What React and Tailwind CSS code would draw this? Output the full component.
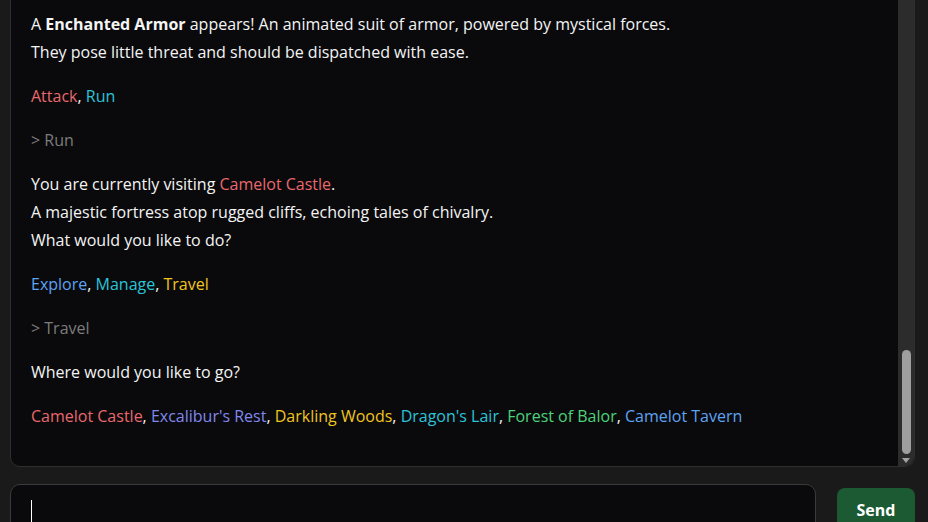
import React from "react";

const C = {
  red: "text-[#e8686c]",
  cyan: "text-[#2cc3d9]",
  blue: "text-[#5ea3f2]",
  indigo: "text-[#8088ec]",
  yellow: "text-[#f0c520]",
  green: "text-[#4cd37a]",
};

function Opts({ items }) {
  return (
    <p className="mb-4">
      {items.map(([t, c], i) => (
        <React.Fragment key={t}>
          <span className={c}>{t}</span>
          {i < items.length - 1 ? ", " : ""}
        </React.Fragment>
      ))}
    </p>
  );
}

export default function App() {
  return (
    <div
      className="h-screen overflow-hidden bg-[#1a1a1a] pl-[10px] pr-[13px] flex flex-col"
      style={{ fontFamily: "'Open Sans', 'Noto Sans', sans-serif" }}
    >
      <div className="-mt-[24px] h-[491px] shrink-0 flex rounded-[10px] border border-[#2e2e2e] bg-[#0a0a0c] overflow-hidden">
        <div className="flex-1 flex flex-col justify-end pl-5 pb-[20px] text-[16px] leading-7 text-[#f4f4f4]">
          <p className="mb-4">
            A <b className="font-bold">Enchanted Armor</b> appears! An animated suit of armor, powered by mystical forces.
            <br />
            They pose little threat and should be dispatched with ease.
          </p>
          <Opts items={[["Attack", C.red], ["Run", C.cyan]]} />
          <p className="mb-4 text-[#7c7c7c]">&gt; Run</p>
          <p className="mb-4">
            You are currently visiting <span className={C.red}>Camelot Castle</span>.
            <br />
            A majestic fortress atop rugged cliffs, echoing tales of chivalry.
            <br />
            What would you like to do?
          </p>
          <Opts items={[["Explore", C.blue], ["Manage", C.cyan], ["Travel", C.yellow]]} />
          <p className="mb-4 text-[#7c7c7c]">&gt; Travel</p>
          <p className="mb-4">Where would you like to go?</p>
          <Opts
            items={[
              ["Camelot Castle", C.red],
              ["Excalibur's Rest", C.indigo],
              ["Darkling Woods", C.yellow],
              ["Dragon's Lair", C.cyan],
              ["Forest of Balor", C.green],
              ["Camelot Tavern", C.blue],
            ]}
          />
        </div>
        <div className="w-[16px] bg-[#2c2c2c] flex flex-col items-center justify-end pb-[3px]">
          <div className="w-[9px] h-[104px] rounded-full bg-[#9e9e9e]" />
          <div className="mt-[4px] w-0 h-0 border-l-[4px] border-r-[4px] border-t-[5px] border-l-transparent border-r-transparent border-t-[#a3a3a3]" />
        </div>
      </div>
      <div className="mt-[17px] flex items-start gap-[21px]">
        <div className="flex-1 h-[60px] rounded-[10px] border border-[#3a3a3a] bg-[#0a0a0c] pl-5 pt-[15px]">
          <div className="w-px h-[24px] bg-white" />
        </div>
        <button className="mt-[4px] w-[78px] h-[44px] rounded-[8px] bg-[#1b5a32] text-white text-[16px] font-bold">
          Send
        </button>
      </div>
    </div>
  );
}
